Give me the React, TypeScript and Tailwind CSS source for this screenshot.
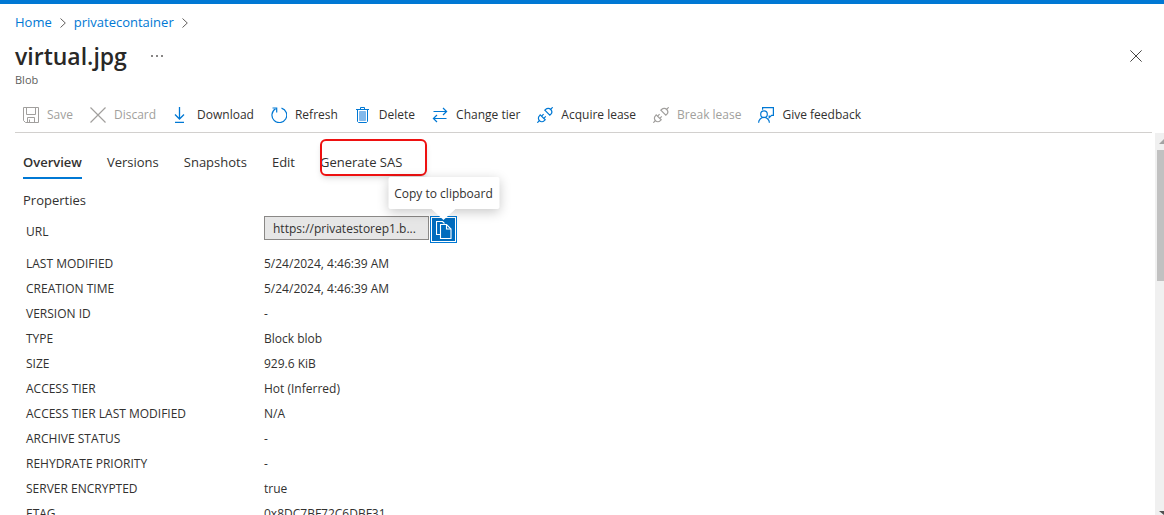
import type { ReactNode } from "react";
import { clsx } from "clsx";

interface ICommand {
  label: string;
  icon: ReactNode;
  disabled?: boolean;
}

function SaveIcon() {
  return (
    <svg viewBox="0 0 16 16" className="size-4" fill="none" stroke="currentColor">
      <path d="M.5.5h15v15H2.5l-2-2z" />
      <path d="M3.5.5v7h9v-7M4.5 15.5v-5h7v5M6.5 12.5v3" />
    </svg>
  );
}

function CrossIcon({ className }: { className: string }) {
  return (
    <svg viewBox="0 0 16 16" className={className} fill="none" stroke="currentColor" strokeWidth="1.2">
      <path d="M.5.5l15 15M15.5.5l-15 15" />
    </svg>
  );
}

function DownloadIcon() {
  return (
    <svg viewBox="0 0 16 16" className="size-4" fill="none" stroke="currentColor" strokeWidth="1.3">
      <path d="M6.5 0v12M2 7.5L6.5 12 11 7.5M2 15.4h9" />
    </svg>
  );
}

function RefreshIcon() {
  return (
    <svg viewBox="0 0 16 16" className="size-4" fill="none" stroke="currentColor" strokeWidth="1.2">
      <path d="M10.5 1.1A7.4 7.4 0 1 1 4.6 1.8" />
      <path d="M1.5 1h4.2v4.4" />
    </svg>
  );
}

function DeleteIcon() {
  return (
    <svg viewBox="0 0 16 16" className="size-4" fill="none" stroke="currentColor">
      <path d="M4.5 4.5h6v9h-6z" fill="#83b9eb" stroke="#83b9eb" />
      <path d="M1 2.5h13M5.5 2.5v-2h4v2M2.5 2.5v12l1 1h8l1-1v-12" />
    </svg>
  );
}

function TierIcon() {
  return (
    <svg viewBox="0 0 16 16" className="size-4" fill="none" stroke="currentColor" strokeWidth="1.2">
      <path d="M1.5 4.5h13M11 1l3.6 3.5L11 8M14.5 11.5h-13M5 8l-3.6 3.5L5 15" />
    </svg>
  );
}

function LeaseIcon() {
  return (
    <svg viewBox="0 0 16 16" className="size-4" fill="none" stroke="currentColor" strokeWidth="1.2">
      <path d="M.3 15.7l2.2-2.2M13.5 2.5L15.7.3" />
      <path d="M3.2 7.8l5 5-.9.9a3.3 3.3 0 0 1-4.8 0 3.4 3.4 0 0 1-.1-4.9z" />
      <path d="M7.8 3.2l5 5 .9-.9a3.4 3.4 0 0 0 0-4.8 3.4 3.4 0 0 0-4.9-.2z" />
      <path d="M4.6 9.2l2-2M6.8 11.4l2-2" />
    </svg>
  );
}

function FeedbackIcon() {
  return (
    <svg viewBox="0 0 16 16" className="size-4" fill="none" stroke="currentColor" strokeWidth="1.2">
      <circle cx="6" cy="7.2" r="3.3" />
      <path d="M.6 15.8a5.4 5.4 0 0 1 10.8 0" />
      <path d="M4.6 2.8V.6h10.8v7.8h-1.8l-2.4 2.2V8.4" />
    </svg>
  );
}

function CopyIcon() {
  return (
    <svg viewBox="0 0 16 18" className="h-[18px] w-4" fill="none" stroke="currentColor" strokeWidth="1.1">
      <path d="M4.5 13.5h-4v-13h6l2 2" />
      <path d="M4.5 3.5h6l4.5 4.5v9.5H4.5z" />
      <path d="M10.5 3.5V8H15" />
    </svg>
  );
}

function Chevron() {
  return (
    <svg viewBox="0 0 6 10" className="mt-px h-2.5 w-1.5" fill="none" stroke="#605e5c">
      <path d="M.5.5L5.3 5 .5 9.5" />
    </svg>
  );
}

const commands: ICommand[] = [
  { label: "Save", icon: <SaveIcon />, disabled: true },
  { label: "Discard", icon: <CrossIcon className="size-4" />, disabled: true },
  { label: "Download", icon: <DownloadIcon /> },
  { label: "Refresh", icon: <RefreshIcon /> },
  { label: "Delete", icon: <DeleteIcon /> },
  { label: "Change tier", icon: <TierIcon /> },
  { label: "Acquire lease", icon: <LeaseIcon /> },
  { label: "Break lease", icon: <LeaseIcon />, disabled: true },
  { label: "Give feedback", icon: <FeedbackIcon /> },
];

const tabs = ["Overview", "Versions", "Snapshots", "Edit", "Generate SAS"];

const properties = [
  ["LAST MODIFIED", "5/24/2024, 4:46:39 AM"],
  ["CREATION TIME", "5/24/2024, 4:46:39 AM"],
  ["VERSION ID", "-"],
  ["TYPE", "Block blob"],
  ["SIZE", "929.6 KiB"],
  ["ACCESS TIER", "Hot (Inferred)"],
  ["ACCESS TIER LAST MODIFIED", "N/A"],
  ["ARCHIVE STATUS", "-"],
  ["REHYDRATE PRIORITY", "-"],
  ["SERVER ENCRYPTED", "true"],
  ["ETAG", "0x8DC7BF72C6DBF31"],
];

function Header() {
  return (
    <header className="shrink-0 border-t-4 border-[#0078d4] pt-2">
      <nav aria-label="Breadcrumb" className="flex h-5 items-center gap-2 px-[15px] text-[#0078d4]">
        <a href="#home">Home</a>
        <Chevron />
        <a href="#privatecontainer">privatecontainer</a>
        <Chevron />
      </nav>
      <div className="mt-1 flex h-9 items-center pt-1 pr-[22px] pl-[15px]">
        <h1 className="text-[23px] font-semibold text-[#292827]">virtual.jpg</h1>
        <button type="button" aria-label="More" className="ml-[22px] flex size-4 items-center justify-center gap-[3px]">
          <span className="size-0.5 rounded-full bg-[#605e5c]" />
          <span className="size-0.5 rounded-full bg-[#605e5c]" />
          <span className="size-0.5 rounded-full bg-[#605e5c]" />
        </button>
        <button type="button" aria-label="Close" className="ml-auto">
          <CrossIcon className="size-3" />
        </button>
      </div>
      <p className="h-4 px-[15px] text-[11px] leading-4 text-[#605e5c]">Blob</p>
      <div
        role="toolbar"
        className="mt-2.5 mr-3 ml-[15px] flex h-[35px] items-center gap-[17px] border-b border-[#d2d0ce] pl-2 text-xs"
      >
        {commands.map(({ label, icon, disabled }) => (
          <button
            key={label}
            type="button"
            disabled={disabled}
            className={clsx(
              "flex items-center gap-2 whitespace-nowrap",
              disabled && "text-[#a19f9d]"
            )}
          >
            <span className={disabled ? "text-[#a19f9d]" : "text-[#0078d4]"}>{icon}</span>
            {label}
          </button>
        ))}
      </div>
    </header>
  );
}

function Tabs() {
  return (
    <div role="tablist" className="mt-3 flex h-[34px] gap-[25px]">
      {tabs.map((tab, index) => (
        <button
          key={tab}
          type="button"
          role="tab"
          aria-selected={index === 0}
          className={clsx(
            "relative border-b-2 pt-0.5 whitespace-nowrap",
            index === 0 ? "border-[#0078d4] font-semibold" : "border-transparent"
          )}
        >
          {tab}
          {tab === "Generate SAS" && (
            <span className="absolute -top-1.5 left-0 h-[37px] w-[107px] rounded-md border-2 border-[#ee1111] shadow-md" />
          )}
        </button>
      ))}
    </div>
  );
}

function UrlField() {
  return (
    <div className="flex gap-px pt-[3px]">
      <input
        id="blob-url"
        readOnly
        value="https://privatestorep1.b..."
        className="h-6 w-[165px] border border-[#8a8886] bg-[#e6e6e6] px-2 text-xs"
      />
      <div className="relative">
        <button
          type="button"
          aria-label="Copy to clipboard"
          className="flex size-[27px] items-center justify-center border border-[#0078d4] bg-[#006cbe] text-white outline outline-offset-[-2px] outline-white"
        >
          <CopyIcon />
        </button>
        <div
          role="tooltip"
          className="absolute bottom-[34px] left-1/2 flex h-8 w-[111px] -translate-x-1/2 items-center justify-center rounded-xs bg-white pt-0.5 text-xs whitespace-nowrap shadow-[0_3px_12px_rgba(0,0,0,0.22)]"
        >
          Copy to clipboard
          <svg viewBox="0 0 24 11" className="absolute top-full left-1/2 h-[11px] w-6 -translate-x-1/2" fill="#fff">
            <path d="M0 0h24L12 11z" />
          </svg>
        </div>
      </div>
    </div>
  );
}

function PropertiesTable() {
  return (
    <table className="ml-[3px]">
      <tbody>
        <tr className="h-[38px]">
          <th scope="row" className="w-[238px] p-0 text-left text-xs font-normal">
            <label htmlFor="blob-url">URL</label>
          </th>
          <td className="p-0 align-top">
            <UrlField />
          </td>
        </tr>
        {properties.map(([name, value]) => (
          <tr key={name} className="h-[25px]">
            <th scope="row" className="p-0 text-left text-xs font-normal">
              {name}
            </th>
            <td className="p-0 text-xs">{value}</td>
          </tr>
        ))}
      </tbody>
    </table>
  );
}

function Scrollbar() {
  return (
    <div aria-hidden="true" className="flex w-[9px] shrink-0 flex-col items-end overflow-hidden bg-[#f0f0f0]">
      <svg viewBox="0 0 5 17" className="h-[17px] w-[5px] shrink-0" fill="#a3a3a3">
        <path d="M0 11l5-5v5z" />
      </svg>
      <div className="h-[131px] w-[7px] shrink-0 bg-[#c1c1c1]" />
      <svg viewBox="0 0 5 4" className="mt-auto h-1 w-[5px] shrink-0" fill="#505050">
        <path d="M0 0h5v4z" />
      </svg>
    </div>
  );
}

export default function App() {
  return (
    <div className="flex h-screen flex-col overflow-hidden bg-white font-['Open_Sans','Noto_Sans',sans-serif] text-[13px] leading-5 text-[#323130]">
      <Header />
      <div className="flex min-h-0 flex-1">
        <main className="min-w-0 flex-1 overflow-hidden pl-[23px]">
          <Tabs />
          <h2 className="mt-[11px] mb-[3px]">Properties</h2>
          <PropertiesTable />
        </main>
        <Scrollbar />
      </div>
    </div>
  );
}
